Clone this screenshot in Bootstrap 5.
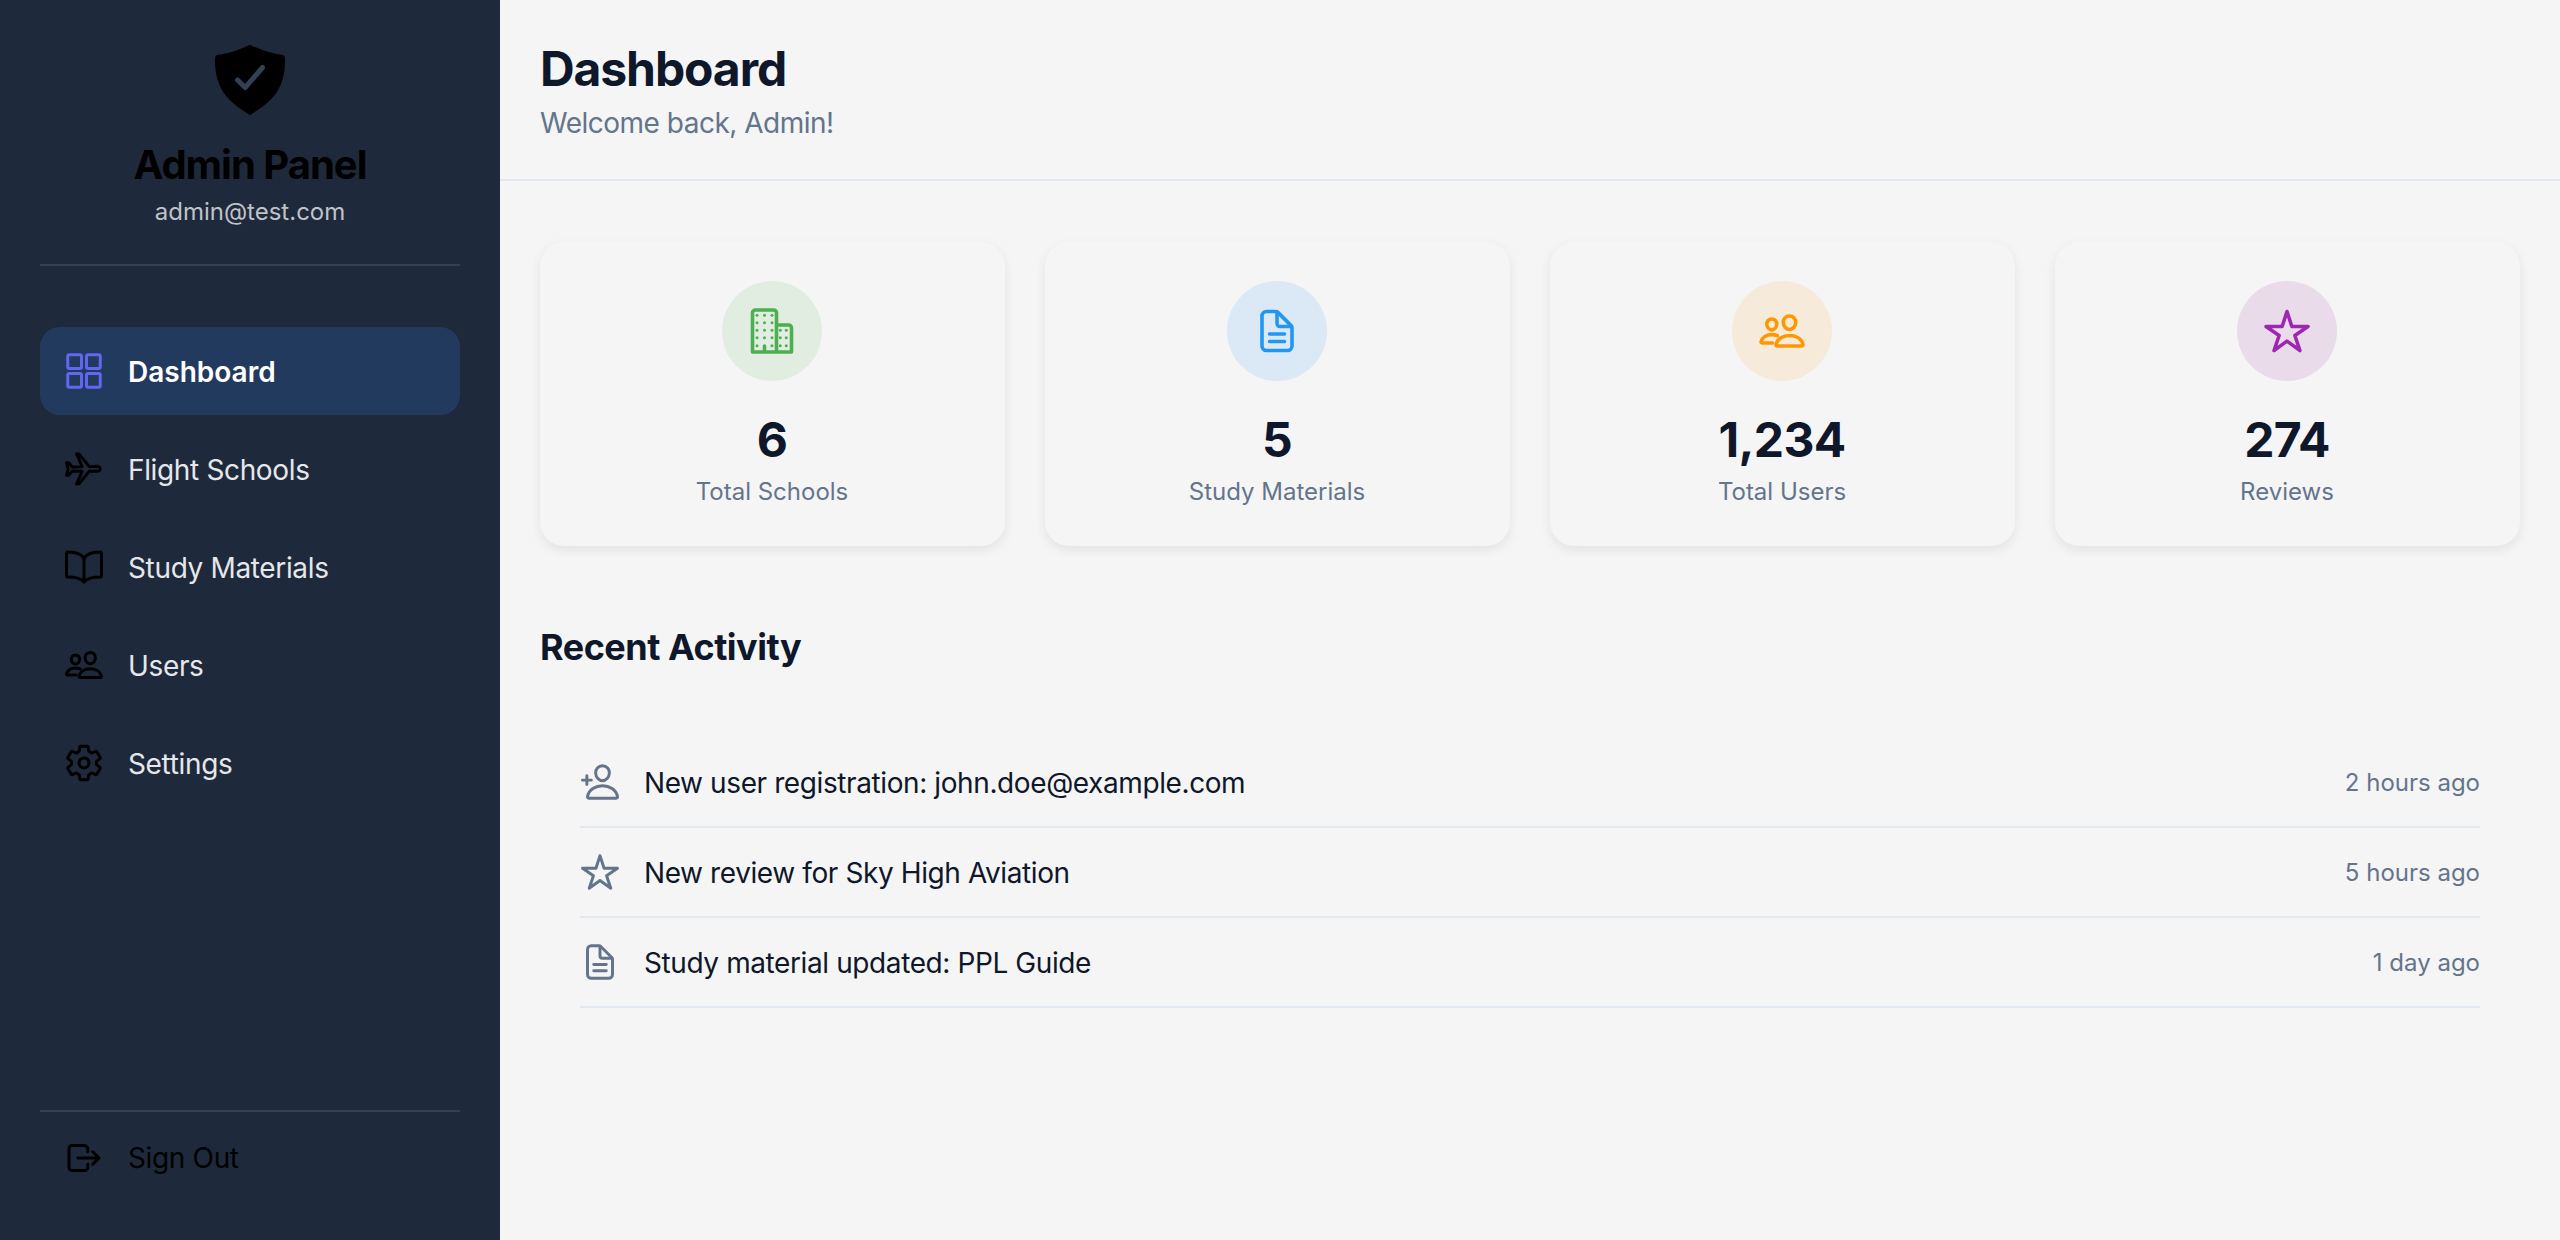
<!DOCTYPE html>
<html lang="en">
<head>
  <meta charset="UTF-8"/>
  <meta name="viewport" content="width=device-width, initial-scale=1.0"/>
  <title>Admin Dashboard</title>
  <link href="https://cdn.jsdelivr.net/npm/bootstrap@5.3.0/dist/css/bootstrap.min.css" rel="stylesheet"/>
  <style>
    html, body { height: 100%; }
    body {
      background-color: #f5f5f5;
      color: #000;
      font-family: Inter, "Liberation Sans", sans-serif;
    }
    .app-shell { height: 1240px; }

    /* sidebar */
    .side-panel {
      width: 500px;
      background-color: #1e293b;
      padding: 40px 40px 38px;
    }
    .side-head {
      height: 226px;
      border-bottom: 2px solid #334155;
    }
    .side-title {
      font-size: 40px;
      font-weight: 700;
      line-height: 48px;
      letter-spacing: -1px;
      margin: 21px 0 0;
      color: #000;
    }
    .side-mail {
      font-size: 24px;
      line-height: 30px;
      color: #bfc3c9;
      margin-top: 8px;
    }
    .side-nav { margin-top: 61px; }
    .side-link {
      height: 88px;
      margin-bottom: 10px;
      padding: 0 24px;
      gap: 24px;
      border-radius: 20px;
      color: #e5e7eb;
      font-size: 28px;
      letter-spacing: -.35px;
      text-decoration: none;
    }
    .side-link span { padding-top: 2px; }
    .side-link.is-active {
      background-color: #233a5f;
      color: #fff;
      font-weight: 600;
      letter-spacing: 0;
    }
    .side-foot {
      border-top: 2px solid #334155;
      padding-top: 2px;
    }
    .side-foot .side-link { color: #000; margin-bottom: 0; }
    .side-foot .side-link span { padding-top: 0; }

    /* main */
    .main-head {
      height: 181px;
      padding: 41px 40px 0;
      border-bottom: 2px solid #e2e8f0;
    }
    .main-title {
      font-size: 48px;
      font-weight: 700;
      line-height: 56px;
      letter-spacing: -1.1px;
      color: #0f172a;
      margin: 0;
    }
    .main-sub {
      font-size: 28px;
      line-height: 40px;
      letter-spacing: -.5px;
      color: #64748b;
      margin-top: 6px;
    }
    .main-body { padding: 61px 40px 0; }
    .stat-box {
      width: 465px;
      height: 304px;
      padding: 39px 1px 0 0;
      background-color: #f5f5f5;
      border-radius: 24px;
      box-shadow: 0 4px 12px rgba(0, 0, 0, .08);
    }
    .stat-dot {
      width: 100px;
      height: 100px;
      border-radius: 50%;
    }
    .dot-green { background-color: #e2ede2; color: #4caf50; }
    .dot-blue { background-color: #dbe8f5; color: #2196f3; }
    .dot-orange { background-color: #f6eadb; color: #ff9800; }
    .dot-purple { background-color: #eadbeb; color: #9c27b0; }
    .stat-num {
      font-size: 48px;
      font-weight: 700;
      line-height: 58px;
      letter-spacing: -.7px;
      color: #0f172a;
      margin-top: 30px;
    }
    .stat-label {
      font-size: 24px;
      line-height: 32px;
      color: #64748b;
      margin-top: 7px;
    }
    .sect-title {
      font-size: 36px;
      font-weight: 700;
      line-height: 44px;
      letter-spacing: -.5px;
      color: #0f172a;
      margin: 79px 0 0;
    }
    .activity-wrap { margin: 69px 40px 0; }
    .activity-row {
      height: 90px;
      border-bottom: 2px solid #e2e8f0;
      gap: 24px;
      font-size: 28px;
      letter-spacing: -.4px;
      color: #0f172a;
    }
    .activity-row span { padding-top: 2px; }
    .activity-time { font-size: 24px; letter-spacing: 0; color: #64748b; }
    .ico { flex: none; display: block; }
    .ico-line { fill: none; stroke: currentColor; stroke-width: 38; stroke-linecap: round; stroke-linejoin: round; }
    .tone-indigo { color: #6366f1; }
    .tone-black { color: #000; }
    .tone-slate { color: #64748b; }
  </style>
</head>
<body>

<svg class="d-none">
  <symbol id="i-doc" viewBox="0 0 512 512"><g class="ico-line"><path d="M416 221.250V416a48 48 0 01-48 48H144a48 48 0 01-48-48V96a48 48 0 0148-48h98.750a32 32 0 0122.620 9.370l141.260 141.260a32 32 0 019.370 22.620z"/><path d="M256 56v120a32 32 0 0032 32h120M176 288h160M176 368h160"/></g></symbol>
  <symbol id="i-star" viewBox="0 0 512 512"><path class="ico-line" d="M480 208H308L256 48l-52 160H32l140 96-54 160 138-100 138 100-54-160z"/></symbol>
  <symbol id="i-people" viewBox="0 0 512 512"><g class="ico-line"><path d="M402 168c-2.930 40.670-33.100 72-66 72s-63.120-31.320-66-72c-3-42.310 26.370-72 66-72s69 30.460 66 72z"/><path d="M336 304c-65.170 0-127.840 32.370-143.540 95.410-2.080 8.340 3.150 16.590 11.720 16.590h263.650c8.570 0 13.770-8.250 11.720-16.590C463.850 335.360 401.180 304 336 304z"/><path d="M200 185.940c-2.340 32.480-26.720 58.060-53 58.060s-50.700-25.570-53-58.060C91.610 152.150 115.340 128 147 128s55.390 24.770 53 57.940z"/><path d="M206 306c-18.050-8.270-37.930-11.450-59-11.450-52 0-102.100 25.850-114.650 76.200-1.650 6.660 2.530 13.250 9.370 13.250H154"/></g></symbol>
</svg>

<div class="app-shell d-flex">

  <!-- Sidebar -->
  <aside class="side-panel d-flex flex-column">
    <div class="side-head text-center">
      <svg class="ico mx-auto" width="80" height="80" viewBox="0 0 512 512"><path fill="#000" d="M479 111.400A16 16 0 0 0 465.900 96.600C379.400 81.100 343.300 69.900 262.600 33.400A16 16 0 0 0 249.400 33.400C168.700 69.900 132.600 81.100 46.100 96.600A16 16 0 0 0 33 111.400C29.100 172.500 37.300 229.400 57.400 280.600C74 322.500 98.500 358.800 130.900 389C163 419 203 447 249 477A13 13 0 0 0 263 477C309 447 349 419 381.100 389C413.500 358.800 438 322.500 454.600 280.600C474.700 229.400 482.900 172.500 479 111.400Z"/><path fill="none" stroke="#334155" stroke-width="32" stroke-linecap="round" stroke-linejoin="round" d="M336 176L225.200 304l-49.200-48"/></svg>
      <h2 class="side-title">Admin Panel</h2>
      <div class="side-mail">admin@test.com</div>
    </div>

    <nav class="side-nav flex-grow-1">
      <a class="side-link is-active d-flex align-items-center" href="#">
        <svg class="ico tone-indigo" width="40" height="40" viewBox="0 0 512 512"><g class="ico-line"><rect x="48" y="48" width="176" height="176" rx="20"/><rect x="288" y="48" width="176" height="176" rx="20"/><rect x="48" y="288" width="176" height="176" rx="20"/><rect x="288" y="288" width="176" height="176" rx="20"/></g></svg>
        <span>Dashboard</span>
      </a>
      <a class="side-link d-flex align-items-center" href="#">
        <svg class="ico tone-black" width="40" height="40" viewBox="0 0 512 512"><path class="ico-line" d="M407.720 224c-3.400 0-14.790.1-18 .3l-64.900 1.700a1.830 1.830 0 01-1.690-.9L193.550 67.560a9 9 0 00-6.660-3.560H160l73 161a2.350 2.350 0 01-2.260 3.350l-121.690 1.800a8.060 8.060 0 01-6.600-3.130l-37-45c-3-3.900-8.620-6-13.510-6H33.080c-1.290 0-1.100 1.210-.75 2.430L52.170 249.900a16.300 16.300 0 010 11.900L32.310 333c-.59 1.950-.69 3 1.430 3H52c8.140 0 9.250-1.060 13.410-6.300l37.700-45.630a8.190 8.190 0 016.600-3.130l120.680 2.660a2.370 2.370 0 012.260 3.350L160 448h26.640a9 9 0 006.650-3.550l129.300-159.460a1.830 1.830 0 011.690-.9l63.900 1.700c3.220.2 14.600.3 18 .3 44 .1 56.370-7.500 56.370-32.500s-12.370-32-56.370-32z"/></svg>
        <span>Flight Schools</span>
      </a>
      <a class="side-link d-flex align-items-center" href="#">
        <svg class="ico tone-black" width="40" height="40" viewBox="0 0 512 512"><path class="ico-line" d="M256 160c16-63.160 76.430-95.410 208-96a15.940 15.940 0 0116 16v288a16 16 0 01-16 16c-128 0-177.450 25.810-208 64-30.370-38-80-64-208-64-9.880 0-16-8.050-16-17.930V80a15.940 15.940 0 0116-16c131.570.59 192 32.840 208 96zM256 160v288"/></svg>
        <span>Study Materials</span>
      </a>
      <a class="side-link d-flex align-items-center" href="#">
        <svg class="ico tone-black" width="40" height="40"><use href="#i-people"/></svg>
        <span>Users</span>
      </a>
      <a class="side-link d-flex align-items-center" href="#">
        <svg class="ico tone-black" width="40" height="40" viewBox="0 0 512 512"><path class="ico-line" d="M262.290 192.310a64 64 0 1057.400 57.400 64.130 64.130 0 00-57.400-57.400zM416.390 256a154.340 154.340 0 01-1.530 20.790l45.210 35.460a10.810 10.810 0 012.450 13.750l-42.770 74a10.810 10.810 0 01-13.140 4.590l-44.900-18.080a16.110 16.110 0 00-15.170 1.750A164.480 164.480 0 01325 400.800a15.940 15.940 0 00-8.820 12.140l-6.730 47.890a11.080 11.080 0 01-10.680 9.170h-85.540a11.110 11.110 0 01-10.690-8.870l-6.720-47.820a16.070 16.070 0 00-9-12.220 155.300 155.300 0 01-21.460-12.570 16 16 0 00-15.110-1.710l-44.890 18.070a10.810 10.810 0 01-13.140-4.580l-42.770-74a10.800 10.800 0 012.450-13.750l38.210-30a16.050 16.050 0 006-14.080c-.36-4.170-.58-8.330-.58-12.500s.21-8.270.58-12.350a16 16 0 00-6.070-13.940l-38.190-30A10.810 10.810 0 0149.480 186l42.770-74a10.810 10.810 0 0113.140-4.590l44.900 18.080a16.110 16.110 0 0015.170-1.750A164.480 164.480 0 01187 111.200a15.940 15.940 0 008.820-12.140l6.730-47.890A11.080 11.080 0 01213.230 42h85.540a11.110 11.110 0 0110.690 8.870l6.720 47.820a16.070 16.070 0 009 12.220 155.300 155.300 0 0121.460 12.570 16 16 0 0015.110 1.710l44.890-18.070a10.810 10.810 0 0113.140 4.580l42.770 74a10.800 10.800 0 01-2.450 13.750l-38.210 30a16.050 16.050 0 00-6.050 14.080c.33 4.140.55 8.300.55 12.470z"/></svg>
        <span>Settings</span>
      </a>
    </nav>

    <div class="side-foot">
      <a class="side-link d-flex align-items-center" href="#">
        <svg class="ico tone-black" width="40" height="40" viewBox="0 0 512 512"><path class="ico-line" d="M304 336v40a40 40 0 01-40 40H104a40 40 0 01-40-40V136a40 40 0 0140-40h152c22.090 0 48 17.910 48 40v40M368 336l80-80-80-80M176 256h256"/></svg>
        <span>Sign Out</span>
      </a>
    </div>
  </aside>

  <!-- Main -->
  <main class="flex-grow-1">
    <header class="main-head">
      <h1 class="main-title">Dashboard</h1>
      <div class="main-sub">Welcome back, Admin!</div>
    </header>

    <div class="main-body">
      <div class="d-flex justify-content-between">
        <div class="stat-box text-center">
          <div class="stat-dot dot-green d-flex align-items-center justify-content-center mx-auto">
            <svg class="ico" width="48" height="48" viewBox="0 0 512 512"><path class="ico-line" d="M176 416v64M80 32h192a32 32 0 0132 32v416H48V64a32 32 0 0132-32zM304 192h128a32 32 0 0132 32v256H304z"/><g fill="currentColor"><circle cx="96" cy="88" r="16"/><circle cx="176" cy="88" r="16"/><circle cx="256" cy="88" r="16"/><circle cx="96" cy="168" r="16"/><circle cx="176" cy="168" r="16"/><circle cx="256" cy="168" r="16"/><circle cx="96" cy="248" r="16"/><circle cx="176" cy="248" r="16"/><circle cx="256" cy="248" r="16"/><circle cx="96" cy="328" r="16"/><circle cx="176" cy="328" r="16"/><circle cx="256" cy="328" r="16"/><circle cx="96" cy="412" r="16"/><circle cx="256" cy="412" r="16"/><circle cx="344" cy="248" r="16"/><circle cx="408" cy="248" r="16"/><circle cx="344" cy="328" r="16"/><circle cx="408" cy="328" r="16"/><circle cx="344" cy="412" r="16"/><circle cx="408" cy="412" r="16"/></g></svg>
          </div>
          <div class="stat-num">6</div>
          <div class="stat-label">Total Schools</div>
        </div>
        <div class="stat-box text-center">
          <div class="stat-dot dot-blue d-flex align-items-center justify-content-center mx-auto">
            <svg class="ico" width="48" height="48"><use href="#i-doc"/></svg>
          </div>
          <div class="stat-num">5</div>
          <div class="stat-label">Study Materials</div>
        </div>
        <div class="stat-box text-center">
          <div class="stat-dot dot-orange d-flex align-items-center justify-content-center mx-auto">
            <svg class="ico" width="48" height="48"><use href="#i-people"/></svg>
          </div>
          <div class="stat-num">1,234</div>
          <div class="stat-label">Total Users</div>
        </div>
        <div class="stat-box text-center">
          <div class="stat-dot dot-purple d-flex align-items-center justify-content-center mx-auto">
            <svg class="ico" width="48" height="48"><use href="#i-star"/></svg>
          </div>
          <div class="stat-num">274</div>
          <div class="stat-label">Reviews</div>
        </div>
      </div>

      <h3 class="sect-title">Recent Activity</h3>

      <div class="activity-wrap">
        <div class="activity-row d-flex align-items-center">
          <svg class="ico tone-slate" width="40" height="40" viewBox="0 0 512 512"><g class="ico-line"><path d="M376 144c-3.920 52.870-44 96-88 96s-84.150-43.120-88-96c-4-55 35-96 88-96s92 42 88 96z"/><path d="M288 304c-87 0-175.300 48-191.640 138.600-2 10.920 4.210 21.400 15.650 21.400H464c11.440 0 17.620-10.480 15.650-21.400C463.300 352 375 304 288 304z"/><path d="M88 176v112M144 232H32"/></g></svg>
          <span class="flex-grow-1">New user registration: john.doe@example.com</span>
          <span class="activity-time">2 hours ago</span>
        </div>
        <div class="activity-row d-flex align-items-center">
          <svg class="ico tone-slate" width="40" height="40"><use href="#i-star"/></svg>
          <span class="flex-grow-1">New review for Sky High Aviation</span>
          <span class="activity-time">5 hours ago</span>
        </div>
        <div class="activity-row d-flex align-items-center">
          <svg class="ico tone-slate" width="40" height="40"><use href="#i-doc"/></svg>
          <span class="flex-grow-1">Study material updated: PPL Guide</span>
          <span class="activity-time">1 day ago</span>
        </div>
      </div>
    </div>
  </main>
</div>

<script src="https://cdn.jsdelivr.net/npm/bootstrap@5.3.0/dist/js/bootstrap.bundle.min.js"></script>
</body>
</html>
